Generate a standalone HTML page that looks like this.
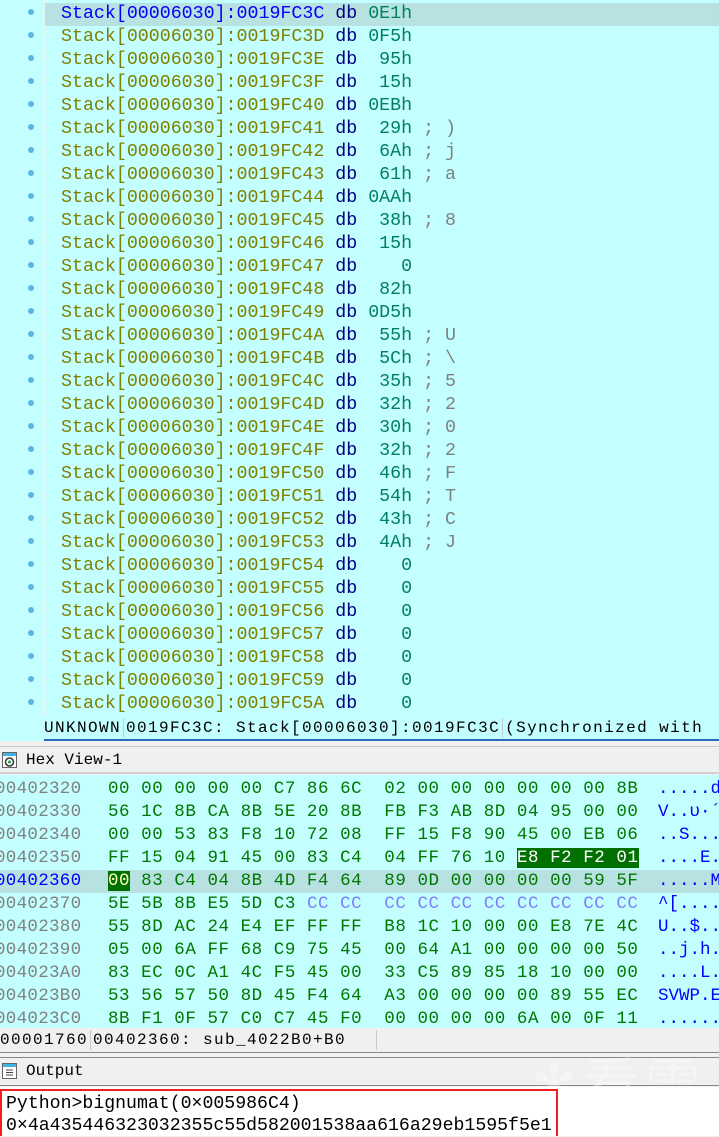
<!DOCTYPE html>
<html><head><meta charset="utf-8"><style>
*{margin:0;padding:0;box-sizing:border-box}
body{width:719px;height:1136px;overflow:hidden;background:#f0f0f0;position:relative;font-family:"Liberation Mono",monospace}
#top{position:absolute;left:0;top:0;width:719px;height:741px;background:#c4ffff}
.ln{position:absolute;left:61px;height:23px;line-height:23px;font-size:18.3px;white-space:pre;color:#808000}
.dot{position:absolute;left:28px;width:6px;height:6px;border-radius:3px;background:#5ab4e6}
.db{color:#000080}.v{color:#008060}.c{color:#808080}
#sel{position:absolute;left:45px;top:3px;width:674px;height:23px;background:#b8e2e2}
#gut{position:absolute;left:44px;top:0;width:1px;height:716px;background:#e6f6f6}
#st1{position:absolute;left:44px;top:716px;width:675px;height:25px;border-bottom:2px solid #2a6ac0;font-size:16px;letter-spacing:1.4px;line-height:24px;white-space:pre;color:#000;font-family:"Liberation Mono",monospace}
.sep{display:inline-block;width:1px;height:20px;background:#c8c8c8;vertical-align:middle;margin:0 2px}
.title{position:absolute;left:0;width:719px;height:27px;background:#f0f0f0;font-size:16px;line-height:24px;color:#000}
#hex{position:absolute;left:0;top:775px;width:719px;height:253px;background:#c4ffff}
.hr{position:absolute;left:0;height:23px;line-height:23px;font-size:17.5px;white-space:pre;width:719px}
.hr span.a{position:absolute;left:-5px;color:#808080;letter-spacing:0.3px}
.hr span.b{position:absolute;left:108px;color:#007800;letter-spacing:0.55px}
.hr span.s{position:absolute;left:658px;color:#0000ff}
.k{color:#8080ff}
.g{background:#007000;color:#fff}
</style></head><body>
<div id="top">
<div id="gut"></div>
<div id="sel"></div>
</div>
<div id="lines"></div>
<script>
var L=[["3C","0E1h",""],["3D","0F5h",""],["3E"," 95h",""],["3F"," 15h",""],["40","0EBh",""],["41"," 29h","; )"],["42"," 6Ah","; j"],["43"," 61h","; a"],["44","0AAh",""],["45"," 38h","; 8"],["46"," 15h",""],["47","   0",""],["48"," 82h",""],["49","0D5h",""],["4A"," 55h","; U"],["4B"," 5Ch","; \\"],["4C"," 35h","; 5"],["4D"," 32h","; 2"],["4E"," 30h","; 0"],["4F"," 32h","; 2"],["50"," 46h","; F"],["51"," 54h","; T"],["52"," 43h","; C"],["53"," 4Ah","; J"],["54","   0",""],["55","   0",""],["56","   0",""],["57","   0",""],["58","   0",""],["59","   0",""],["5A","   0",""]];
var h="";
L.forEach(function(r,i){var y=3+i*23;
h+='<div class="dot" style="top:'+(y+6)+'px"></div>';
h+='<div class="ln" style="top:'+y+'px'+(i==0?';color:#0000ff':'')+'">Stack[00006030]:0019FC'+r[0]+' <span class="db">db</span> <span class="v">'+r[1]+'</span> <span class="c">'+r[2]+'</span></div>';});
document.getElementById('lines').innerHTML=h;
</script>
<div id="st1">UNKNOWN<span class="sep"></span>0019FC3C: Stack[00006030]:0019FC3C<span class="sep"></span>(Synchronized with</div>
<div class="title" style="top:746px;border-top:1px solid #c8c8c8;border-bottom:2px solid #d0d0d0;height:28px">
<svg style="position:absolute;left:2px;top:5px" width="15" height="16"><rect x="0.5" y="0.5" width="14" height="15" fill="#fff" stroke="#666"/><rect x="1" y="1" width="13" height="3" fill="#3cb4e6"/><circle cx="7.5" cy="10" r="4" fill="none" stroke="#333" stroke-width="1.5"/><circle cx="7.5" cy="10" r="1.5" fill="#1a9a3a"/></svg>
<span style="position:absolute;left:26px;top:1px;font-family:'Liberation Mono',monospace">Hex View-1</span></div>
<div id="hex">
<div style="position:absolute;left:0;top:95px;width:719px;height:23px;background:#b8e2e2"></div>
<div class="hr" style="top:3px"><span class="a">00402320</span><span class="b">00 00 00 00 00 C7 86 6C  02 00 00 00 00 00 00 8B</span><span class="s">.....d</span></div>
<div class="hr" style="top:26px"><span class="a">00402330</span><span class="b">56 1C 8B CA 8B 5E 20 8B  FB F3 AB 8D 04 95 00 00</span><span class="s">V..υ·´</span></div>
<div class="hr" style="top:49px"><span class="a">00402340</span><span class="b">00 00 53 83 F8 10 72 08  FF 15 F8 90 45 00 EB 06</span><span class="s">..S...</span></div>
<div class="hr" style="top:72px"><span class="a">00402350</span><span class="b">FF 15 04 91 45 00 83 C4  04 FF 76 10 <span class="g">E8 F2 F2 01</span></span><span class="s">....E.</span></div>
<div class="hr" style="top:95px"><span class="a" style="color:#0000ff">00402360</span><span class="b"><span class="g" style="color:#ffffc0">00</span> 83 C4 04 8B 4D F4 64  89 0D 00 00 00 00 59 5F</span><span class="s">.....M</span></div>
<div class="hr" style="top:118px"><span class="a">00402370</span><span class="b">5E 5B 8B E5 5D C3 <span class="k">CC CC  CC CC CC CC CC CC CC CC</span></span><span class="s">^[....</span></div>
<div class="hr" style="top:141px"><span class="a">00402380</span><span class="b">55 8D AC 24 E4 EF FF FF  B8 1C 10 00 00 E8 7E 4C</span><span class="s">U..$..</span></div>
<div class="hr" style="top:164px"><span class="a">00402390</span><span class="b">05 00 6A FF 68 C9 75 45  00 64 A1 00 00 00 00 50</span><span class="s">..j.h.</span></div>
<div class="hr" style="top:187px"><span class="a">004023A0</span><span class="b">83 EC 0C A1 4C F5 45 00  33 C5 89 85 18 10 00 00</span><span class="s">....L.</span></div>
<div class="hr" style="top:210px"><span class="a">004023B0</span><span class="b">53 56 57 50 8D 45 F4 64  A3 00 00 00 00 89 55 EC</span><span class="s">SVWP.E</span></div>
<div class="hr" style="top:233px;height:20px;overflow:hidden"><span class="a">004023C0</span><span class="b">8B F1 0F 57 C0 C7 45 F0  00 00 00 00 6A 00 0F 11</span><span class="s">......</span></div>
</div>
<div style="position:absolute;left:0;top:1028px;height:25px;font-size:16px;letter-spacing:1.4px;line-height:24px;white-space:pre">00001760<span class="sep"></span>00402360: sub_4022B0+B0<span class="sep" style="margin-left:30px"></span></div>
<div style="position:absolute;left:0;top:1052px;width:719px;height:1px;background:#888"></div>
<div style="position:absolute;left:0;top:1057px;width:719px;height:1px;background:#888"></div>
<div class="title" style="top:1058px;height:28px;border-bottom:1px solid #888">
<svg style="position:absolute;left:2px;top:5px" width="15" height="16"><rect x="0.5" y="0.5" width="14" height="15" fill="#fff" stroke="#666"/><rect x="1" y="1" width="13" height="3" fill="#3cb4e6"/><path d="M4 7h7M4 9.5h7M4 12h7" stroke="#444"/></svg>
<span style="position:absolute;left:26px;top:1px;font-family:'Liberation Mono',monospace">Output</span></div>
<div style="position:absolute;left:0;top:1087px;width:719px;height:49px;background:#fff"></div>
<div style="position:absolute;left:530px;top:1040px;font-size:56px;color:rgba(255,255,255,0.35);font-family:'Noto Sans CJK SC',sans-serif;letter-spacing:6px">✻看雪</div>
<div style="position:absolute;left:0;top:1089px;width:558px;height:47px;border:2px solid #f02020;border-bottom:none;font-size:18.2px;line-height:22px;padding:2px 0 0 4px;white-space:pre;color:#000">Python&gt;bignumat(0×005986C4)
0×4a435446323032355c55d582001538aa616a29eb1595f5e1</div>
</body></html>
